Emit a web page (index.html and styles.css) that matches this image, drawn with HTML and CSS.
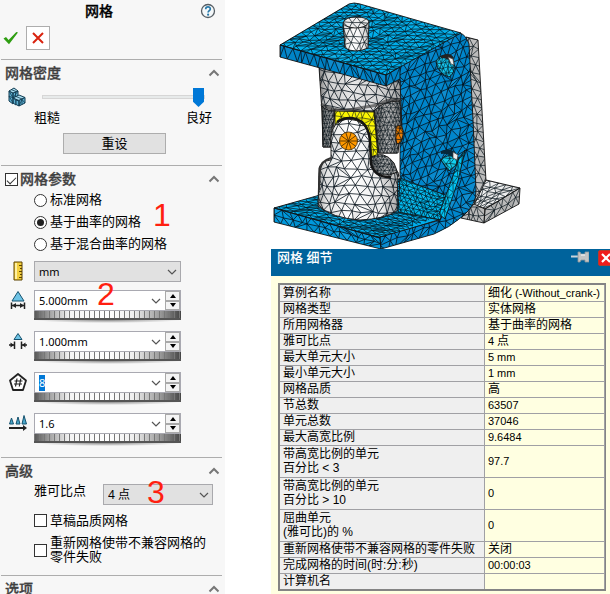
FILE: index.html
```
<!DOCTYPE html>
<html lang="zh-CN">
<head>
<meta charset="utf-8">
<title>网格</title>
<link rel="stylesheet" href="styles.css">
</head>
<body>
<svg class="defs" aria-hidden="true">
  <symbol id="chev-up" viewBox="0 0 12 8"><path d="M1.500 6.500L6 2l4.500 4.500" fill="none" stroke="#777" stroke-width="2"/></symbol>
  <symbol id="chev-down" viewBox="0 0 10 6"><path d="M1 1l4 4 4-4" fill="none" stroke="#555" stroke-width="1.200"/></symbol>
  <symbol id="tri-up" viewBox="0 0 6 4"><path d="M0 4l3-4 3 4z"/></symbol>
  <symbol id="tri-down" viewBox="0 0 6 4"><path d="M0 0h6L3 4z"/></symbol>
</svg>
<main class="app">
  <form class="panel">
    <header class="panel-title">
      <h1>网格</h1>
      <button type="button" class="bare help" aria-label="帮助">
        <svg width="16" height="16" viewBox="0 0 16 16"><circle cx="8" cy="8" r="6.500" fill="#f4f8fa" stroke="#555d63" stroke-width="1.300"/><path d="M5.700 6.200C5.700 3.100 10.400 3.200 10.300 6c0 1.600-2.200 1.700-2.200 3.500" fill="none" stroke="#2878a8" stroke-width="1.700"/><circle cx="8.100" cy="11.700" r="1.100" fill="#2878a8"/></svg>
      </button>
    </header>
    <div class="actions">
      <button type="button" class="bare" aria-label="确定"><svg width="16" height="14" viewBox="0 0 16 14"><path d="M.5 7.500l2.500-1.500 2.600 3L13.300 1l1.700.5L6 13.300z" fill="#2f9e12"/></svg></button>
      <button type="button" class="cancel" aria-label="取消"><svg width="12" height="12" viewBox="0 0 12 12"><path d="M1 1l10 10M11 1L1 11" stroke="#d9230f" stroke-width="2"/></svg></button>
    </div>

    <section class="section">
      <div class="head"><h2>网格密度</h2><button type="button" class="bare" aria-label="折叠网格密度"><svg width="12" height="8"><use href="#chev-up"/></svg></button></div>
      <div class="slider-row">
        <svg width="18" height="20" viewBox="0 0 18 20"><g fill="#5eb0d2" stroke="#123c52" stroke-width="1" stroke-linejoin="round"><path d="M1 4l4 2v11l-4-3zM5 6l5-2v5l-5 2zM5 11l3 2v5l-3-2z"/><path fill="#a8dcee" d="M1 4l5-3 4 3-5 2zM5 11l6-3 6 2.500-6 3z"/><path d="M8 13l3 1v5l-3-1.500zM11 13.500l6-3v5.500l-6 3z"/><path fill="none" stroke-width=".8" d="M1 9l4 2M1 4l4 7M5 11l5-7M7.500 5v5M3 2.500l5 2M1 9l4 7M11 19l3-6.500 3 3.500M14 12v5.500M8 9.500l6 2.500"/></g></svg>
        <input type="range" min="0" max="100" value="100" aria-label="网格密度">
      </div>
      <div class="scale"><span>粗糙</span><span>良好</span></div>
      <button type="button" class="reset">重设</button>
    </section>

    <section class="section">
      <div class="head"><label class="head-check"><input type="checkbox" checked><span>网格参数</span></label><button type="button" class="bare" aria-label="折叠网格参数"><svg width="12" height="8"><use href="#chev-up"/></svg></button></div>
      <div class="radios">
        <label><input type="radio" name="mesher">标准网格</label>
        <label><input type="radio" name="mesher" checked>基于曲率的网格</label>
        <label><input type="radio" name="mesher">基于混合曲率的网格</label>
        <span class="mark mark-1">1</span>
      </div>
      <div class="param unit">
        <svg width="20" height="20" viewBox="0 0 20 20"><path d="M6 1h8v18H6z" fill="#f3cf3c" stroke="#5c4300"/><path d="M7 2h2v16H7z" fill="#fff0a0"/><path d="M11 4.500h3M12 7.500h2M11 10.500h3M12 13.500h2M11 16.500h3" stroke="#5c4300"/></svg>
        <div class="select"><select aria-label="单位"><option>mm</option></select><svg width="10" height="6"><use href="#chev-down"/></svg></div>
      </div>
      <div class="params">
        <div class="param">
          <svg width="20" height="20" viewBox="0 0 20 20"><path d="M10 1.500L16 11H4z" fill="#6fc4e6" stroke="#16526e"/><path d="M3.500 12.500v6.500M16.500 12.500v6.500M4 15.500h12" stroke="#222" stroke-width="1.500"/><path d="M4 15.500l4-2.500v5zM16 15.500l-4-2.500v5z" fill="#222"/></svg>
          <div class="spin"><div class="field"><input type="text" value="5.000mm" aria-label="最大单元大小"><button type="button" class="bare drop" aria-label="列表"><svg width="10" height="6"><use href="#chev-down"/></svg></button><div class="steps"><button type="button" aria-label="增加"><svg width="6" height="4"><use href="#tri-up"/></svg></button><button type="button" aria-label="减少"><svg width="6" height="4"><use href="#tri-down"/></svg></button></div></div><div class="wheel"></div><div class="shade"></div></div>
          <span class="mark mark-2">2</span>
        </div>
        <div class="param">
          <svg width="20" height="20" viewBox="0 0 20 20"><path d="M10 2.500l4 6H6z" fill="#6fc4e6" stroke="#16526e"/><path d="M6.500 10.500v7.500M13.500 10.500v7.500M1 14h5M14 14h5" stroke="#222" stroke-width="1.500"/><path d="M6 14l-3.500-2.500v5zM14 14l3.500-2.500v5z" fill="#222"/></svg>
          <div class="spin"><div class="field"><input type="text" value="1.000mm" aria-label="最小单元大小"><button type="button" class="bare drop" aria-label="列表"><svg width="10" height="6"><use href="#chev-down"/></svg></button><div class="steps"><button type="button" aria-label="增加"><svg width="6" height="4"><use href="#tri-up"/></svg></button><button type="button" aria-label="减少"><svg width="6" height="4"><use href="#tri-down"/></svg></button></div></div><div class="wheel"></div><div class="shade"></div></div>
        </div>
        <div class="param">
          <svg width="20" height="20" viewBox="0 0 20 20"><path d="M10 2l8 6.500-3 9.500H5L2 8.500z" fill="#fff" stroke="#222" stroke-width="1.800" stroke-linejoin="round"/><path d="M9 6.500l-1.500 8M12.800 6.500l-1.500 8M6.500 9h8M6 12h8" stroke="#222" stroke-width="1.200"/></svg>
          <div class="spin"><div class="field"><input type="text" value="8" id="circle-count" aria-label="圆中最小单元数"><button type="button" class="bare drop" aria-label="列表"><svg width="10" height="6"><use href="#chev-down"/></svg></button><div class="steps"><button type="button" aria-label="增加"><svg width="6" height="4"><use href="#tri-up"/></svg></button><button type="button" aria-label="减少"><svg width="6" height="4"><use href="#tri-down"/></svg></button></div></div><div class="wheel"></div><div class="shade"></div></div>
        </div>
        <div class="param">
          <svg width="20" height="20" viewBox="0 0 20 20"><path d="M3.500 5l2 6h-4zM10 4l2 7H8zM16 2.500l2.500 8.500h-4.500z" fill="#4aa8cc" stroke="#16526e"/><path d="M1 15h15" stroke="#222" stroke-width="2"/><path d="M19 15l-4-3v6z" fill="#222"/></svg>
          <div class="spin"><div class="field"><input type="text" value="1.6" aria-label="单元大小增长比率"><button type="button" class="bare drop" aria-label="列表"><svg width="10" height="6"><use href="#chev-down"/></svg></button><div class="steps"><button type="button" aria-label="增加"><svg width="6" height="4"><use href="#tri-up"/></svg></button><button type="button" aria-label="减少"><svg width="6" height="4"><use href="#tri-down"/></svg></button></div></div><div class="wheel"></div><div class="shade"></div></div>
        </div>
      </div>
    </section>

    <section class="section">
      <div class="head"><h2>高级</h2><button type="button" class="bare" aria-label="折叠高级"><svg width="12" height="8"><use href="#chev-up"/></svg></button></div>
      <div class="jacobian">
        <label for="jacobian">雅可比点</label>
        <div class="select"><select id="jacobian"><option>4 点</option></select><svg width="10" height="6"><use href="#chev-down"/></svg></div>
        <span class="mark mark-3">3</span>
      </div>
      <div class="checks">
        <label><input type="checkbox"><span>草稿品质网格</span></label>
        <label><input type="checkbox"><span>重新网格使带不兼容网格的<br>零件失败</span></label>
      </div>
    </section>

    <section class="section">
      <div class="head"><h2>选项</h2><button type="button" class="bare" aria-label="展开选项"><svg width="12" height="8"><use href="#chev-up"/></svg></button></div>
    </section>
  </form>

  <div class="view">
    <svg id="model" class="model" viewBox="271 0 339 249" role="img" aria-label="网格模型"></svg>
    <section class="details">
      <header class="bar">
        <h2>网格 细节</h2>
        <button type="button" class="bare pin" aria-label="固定"><svg width="18" height="12" viewBox="0 0 18 12"><path d="M0 5.500h7" stroke="#c8d4dc" stroke-width="2"/><path d="M7 1h2l1 2h4V1h4v10h-4V9h-4l-1 2H7z" fill="#c5c5c5" stroke="#8e979c" stroke-width=".8"/><path d="M10 4h4" stroke="#fff"/></svg></button>
        <button type="button" class="bare close" aria-label="关闭"><svg width="10" height="10" viewBox="0 0 10 10"><path d="M1 1l8 8M9 1L1 9" stroke="#fff" stroke-width="2.200"/></svg></button>
      </header>
      <div class="table-wrap">
        <table>
          <tbody>
            <tr><th scope="row">算例名称</th><td><span>细化</span> (-Without_crank-)</td></tr>
            <tr><th scope="row">网格类型</th><td><span>实体网格</span></td></tr>
            <tr><th scope="row">所用网格器</th><td><span>基于曲率的网格</span></td></tr>
            <tr><th scope="row">雅可比点</th><td>4 <span>点</span></td></tr>
            <tr><th scope="row">最大单元大小</th><td>5 mm</td></tr>
            <tr><th scope="row">最小单元大小</th><td>1 mm</td></tr>
            <tr><th scope="row">网格品质</th><td><span>高</span></td></tr>
            <tr><th scope="row">节总数</th><td>63507</td></tr>
            <tr><th scope="row">单元总数</th><td>37046</td></tr>
            <tr><th scope="row">最大高宽比例</th><td>9.6484</td></tr>
            <tr class="tall"><th scope="row">带高宽比例的单元<br>百分比 &lt; 3</th><td>97.7</td></tr>
            <tr class="tall"><th scope="row">带高宽比例的单元<br>百分比 &gt; 10</th><td>0</td></tr>
            <tr class="tall"><th scope="row">屈曲单元<br>(雅可比)的 %</th><td>0</td></tr>
            <tr><th scope="row">重新网格使带不兼容网格的零件失败</th><td><span>关闭</span></td></tr>
            <tr><th scope="row">完成网格的时间(时:分:秒)</th><td>00:00:03</td></tr>
            <tr><th scope="row">计算机名</th><td></td></tr>
          </tbody>
        </table>
      </div>
    </section>
  </div>
</main>
<script src="model.js"></script>
</body>
</html>
```
FILE: styles.css
```
* { box-sizing: border-box; }

body {
  margin: 0;
  background: #fff;
  color: #000;
  font: 13px/16px "Liberation Sans", "Noto Sans CJK SC", sans-serif;
  overflow: hidden;
}

h1, h2 { margin: 0; font-size: 14px; line-height: 20px; font-weight: 500; }
svg { display: block; }
button, input, select { font: inherit; color: inherit; margin: 0; }
.defs { position: absolute; width: 0; height: 0; }
.bare { border: 0; padding: 0; background: none; }

.app {
  display: grid;
  grid-template-columns: 225px minmax(0, 1fr);
  column-gap: 46px;
  height: 100vh;
}

/* Property panel */
.panel {
  background: #f7f7f7;
  padding: 0 3px 0 1px;
  overflow: hidden;
}

.panel-title {
  display: grid;
  grid-template-columns: 1fr auto 1fr;
  align-items: center;
  height: 22px;
  padding-right: 6px;
}

.panel-title h1 { grid-column: 2; }
.help { justify-self: end; }

.panel-title h1 { margin-right: 18px; }
.panel-title { grid-template-columns: 84px auto 1fr; }

.actions {
  display: flex;
  align-items: center;
  gap: 7px;
  height: 37px;
  padding: 0 2px 5px;
}

.cancel {
  display: grid;
  place-items: center;
  width: 24px;
  height: 24px;
  padding: 0;
  border: 1px solid #adadad;
  background: #fff;
}

.section { border-top: 1px solid #adadad; padding-bottom: 11px; }

.head {
  display: flex;
  align-items: center;
  justify-content: space-between;
  height: 26px;
  padding: 0 2px 0 4px;
  color: #404040;
}

.head-check { display: flex; align-items: center; gap: 2px; font-size: 14px; font-weight: 500; }
.head h2, .head-check span, .panel-title h1 { -webkit-text-stroke: 0.3px; }

input[type="checkbox"], input[type="radio"] {
  appearance: none;
  flex: none;
  display: grid;
  place-items: center;
  width: 13px;
  height: 13px;
  border: 1px solid #333;
  background: #fff;
}

input[type="radio"] { border-radius: 50%; }
input[type="radio"]:checked::before { content: ""; width: 7px; height: 7px; border-radius: 50%; background: #222; }
input[type="checkbox"]:checked::before {
  content: "";
  width: 8px;
  height: 4px;
  border: solid #333;
  border-width: 0 0 1px 1px;
  transform: rotate(-45deg);
}

.slider-row { display: flex; align-items: center; height: 22px; padding-left: 7px; gap: 16px; }

input[type="range"] { appearance: none; width: 163px; height: 20px; background: none; }
input[type="range"]::-webkit-slider-runnable-track { height: 4px; border: 1px solid #d6d6d6; background: #e7eaea; }
input[type="range"]::-webkit-slider-thumb {
  appearance: none;
  width: 11px;
  height: 19px;
  margin-top: -8px;
  background: #0078d7;
  clip-path: polygon(0 0, 100% 0, 100% 72%, 50% 100%, 0 72%);
}

.scale { display: flex; justify-content: space-between; height: 20px; padding: 2px 10px 2px 33px; }

.reset {
  display: block;
  width: 103px;
  height: 21px;
  margin: 5px 0 0 62px;
  padding: 0;
  border: 1px solid #adadad;
  background: #e1e1e1;
  line-height: 19px;
}

.radios { position: relative; display: flex; flex-direction: column; align-items: flex-start; gap: 6px; padding-left: 33px; }
.radios label, .checks label { display: flex; align-items: center; gap: 3px; }

.mark {
  position: absolute;
  color: #ff1f10;
  font: 32px/32px "Liberation Sans", sans-serif;
  pointer-events: none;
}

.mark-1 { left: 152px; top: 7px; }
.mark-2 { left: 96px; top: -12px; }
.mark-3 { left: 146px; top: -8px; }

.param { position: relative; display: grid; grid-template-columns: 26px 147px; align-items: start; padding-left: 7px; }
.unit { margin: 9px 0 8px; }
.params { display: flex; flex-direction: column; gap: 8px; }

.select { position: relative; }
.select svg { position: absolute; right: 4px; top: 8px; pointer-events: none; }

select {
  appearance: none;
  display: block;
  width: 100%;
  height: 21px;
  padding: 0 4px;
  border: 1px solid #a9a9ad;
  border-radius: 0;
  background: #e1e1e1;
  font: 11px/16px "Noto Sans", "Noto Sans CJK SC", sans-serif;
}

#jacobian { font-size: 12px; }

.field { display: flex; height: 21px; border: 1px solid #a9a9b1; background: #fff; }

.field input {
  flex: 1;
  min-width: 0;
  border: 0;
  padding: 0 4px;
  background: none;
  font: 11px/16px "Noto Sans", "Noto Sans CJK SC", sans-serif;
  outline: 0;
}

.field input::selection { background: #0078d7; color: #fff; }
.drop { display: grid; place-items: center; width: 18px; }
.steps { display: grid; grid-template-rows: 1fr 1fr; width: 15px; }
.steps button { display: grid; place-items: center; padding: 0; border: 1px solid #a9a9a9; background: #f4f4f4; }

.wheel {
  height: 9px;
  border-bottom: 2px solid #555;
  background:
    repeating-linear-gradient(90deg, #777 0 1px, transparent 1px 5px),
    linear-gradient(90deg, #555, #aaa 12%, #f4f4f4 24%, #fff 50%, #eee 68%, #999 86%, #444);
}

.shade { height: 3px; background: radial-gradient(ellipse 50% 100% at 50% 0, #8c8c8c, #f7f7f7); }

.jacobian {
  position: relative;
  display: grid;
  grid-template-columns: 69px 110px;
  align-items: start;
  padding-left: 33px;
  line-height: 14px;
}

.checks { display: flex; flex-direction: column; gap: 8px; padding: 8px 0 0 33px; line-height: 14px; }
.checks label { min-height: 15px; }

/* Model view and details window */
.view { display: flex; flex-direction: column; min-width: 0; }
.model { width: 100%; height: auto; flex: none; }
.details { flex: 1; background: #ffffe1; }

.bar {
  display: flex;
  align-items: flex-start;
  height: 27px;
  background: #00639c;
  color: #fff;
}

.bar h2 { flex: 1; padding-left: 6px; font-size: 13px; line-height: 18px; }
.pin { margin: 2px 9px 0 0; }

.close {
  display: grid;
  place-items: center;
  width: 16px;
  height: 16px;
  margin: 1px -4px 0 0;
  border: 1px solid #b53a2c;
  border-radius: 2px;
  background: #f01c1c;
}

.table-wrap { margin: 7px 4px 0 7px; border: solid #848484; border-width: 2px 1px 2px 2px; }

table {
  width: 100%;
  border-collapse: collapse;
  table-layout: fixed;
  font: 12px/14px "Liberation Sans", "Noto Sans CJK SC", sans-serif;
}

tr { height: 16px; }
th, td { padding: 0 3px; border-bottom: 1px solid #a0a0a4; border-right: 1px solid #a0a0a4; text-align: left; font-weight: 400; white-space: nowrap; }
th { width: 63%; background: #efefef; }
td { font-size: 11px; }
td span { font-size: 12px; }
.tall { height: 32px; }
tr:last-child th, tr:last-child td { border-bottom: 0; }
```
FILE: model.js
```
// Draws the meshed assembly: each face is an outline filled with a
// jittered triangular grid spanned between four corner points.
const NS = "http://www.w3.org/2000/svg";
const model = document.getElementById("model");
let seed = 7;
const rnd = () => (seed = (seed * 16807) % 2147483647) / 2147483647;
const add = (name, attrs, parent = model) => {
  const el = document.createElementNS(NS, name);
  for (const key in attrs) el.setAttribute(key, attrs[key]);
  parent.appendChild(el);
  return el;
};
let count = 0;

function face(outline, fill, quad, nu, nv, round = false, line = 0.7) {
  const id = "face" + count++;
  add("path", { d: outline }, add("clipPath", { id }));
  add("path", { d: outline, fill });
  const g = add("g", { "clip-path": `url(#${id})` });
  const pts = [];
  for (let j = 0; j <= nv; j++) {
    pts.push([]);
    for (let i = 0; i <= nu; i++) {
      let u = i / nu, v = j / nv;
      if (i && i < nu) u += (rnd() - 0.5) * 0.5 / nu + (j % 2 ? 0.25 : -0.25) / nu;
      if (j && j < nv) v += (rnd() - 0.5) * 0.4 / nv;
      if (round) u = u * 0.5 + (1 - Math.cos(Math.PI * u)) / 4;
      const at = k => (quad[0][k] * (1 - u) + quad[1][k] * u) * (1 - v) + (quad[3][k] * (1 - u) + quad[2][k] * u) * v;
      pts[j].push([at(0).toFixed(1), at(1).toFixed(1)]);
    }
  }
  let d = "";
  for (let j = 0; j < nv; j++) {
    for (let i = 0; i < nu; i++) {
      const a = pts[j][i], b = pts[j][i + 1], c = pts[j + 1][i + 1], e = pts[j + 1][i];
      const flip = rnd() < 0.15 ? j % 2 : !(j % 2);
      const tri = flip ? [a, b, e] : [a, b, c];
      add("path", { d: `M${tri.join("L")}Z`, fill: rnd() < 0.5 ? "#fff" : "#000", opacity: (rnd() * 0.08).toFixed(2) }, g);
      d += `M${a}L${b}M${a}L${e}` + (flip ? `M${b}L${e}` : `M${a}L${c}`);
    }
  }
  add("path", { d, fill: "none", stroke: "#06121a", "stroke-width": line }, g);
  add("path", { d: outline, fill: "none", stroke: "#111", "stroke-width": 0.9 });
}

function gradient(id, stops) {
  const g = add("linearGradient", { id });
  stops.forEach(([offset, color]) => add("stop", { offset, "stop-color": color }, g));
  return `url(#${id})`;
}
const steel = gradient("steel", [[0, "#888"], [0.1, "#ccc"], [0.4, "#e8e8e8"], [0.8, "#d0d0d0"], [1, "#999"]]);
const bright = gradient("bright", [[0, "#aaa"], [0.1, "#e4e4e4"], [0.4, "#fff"], [0.8, "#eee"], [1, "#a8a8a8"]]);
const dark = gradient("dark", [[0, "#666"], [0.5, "#b4b4b4"], [1, "#909090"]]);

// Rear bracket
face("M466 37L478 40L486 181L487 208L475 208Z", "#bbb", [[466, 37], [478, 40], [489, 208], [475, 208]], 2, 20);
face("M486 180L520 188L485 209L474 205Z", "#efefef", [[486, 180], [520, 188], [485, 209], [470, 203]], 5, 5);
face("M461 218L474 204L485 209L484 223Z", "#bbb", [[461, 207], [485, 207], [484, 223], [461, 223]], 4, 2);
face("M485 209L520 188L519 204L484 223Z", "#bbb", [[485, 209], [520, 188], [519, 204], [484, 223]], 5, 2);

// Front base
face("M274 208L320 195L404 178L450 197L438 220L380 238Z", "#00aeec", [[274, 208], [390, 172], [456, 210], [380, 238]], 18, 14);
face("M274 208L380 238L381 249L274 222Z", "#0098dc", [[274, 208], [380, 238], [381, 249], [274, 222]], 13, 2, false, 0.8);

// Upright plate
face("M386 74L460 33Q466 35 469 44L473 120L476 190Q477 204 463 216Q449 228 434 234L381 249L380 237L440 220L447 197L400 181L400 79L386 87Z", "#0086cc", [[378, 65], [472, 28], [478, 216], [380, 254]], 12, 22, false, 0.8);
face("M400 178L448 196L440 220L398 212Z", "#00baf0", [[396, 178], [450, 196], [442, 225], [396, 212]], 10, 8);
face("M465 150L458 181L445 219L439 214L449 187L459 158Z", "#00c4f4", [[459, 148], [466, 150], [445, 219], [438, 215]], 2, 10, false, 0.6);

// Mounting holes
face("M436 62Q438 56 445 55Q454 55 454 64Q455 74 449 77Q438 74 436 62Z", "#12c5ef", [[434, 54], [455, 52], [454, 77], [435, 77]], 5, 5, false, 0.6);
add("path", { d: "M441 56Q450 51 454 58L450 62Q449 58 441 58Z", fill: "#222" });
add("path", { d: "M448 57l5 2 1 6-3-1z", fill: "#eee", stroke: "#444", "stroke-width": 0.7 });
face("M441 160Q447 153 458 157L456 165L449 171Z", "#12d0ef", [[440, 152], [460, 152], [458, 171], [442, 170]], 3, 3, false, 0.6);
add("path", { d: "M441 151Q450 147 456 153L453 158Q448 153 441 154Z", fill: "#07283a" });
add("path", { d: "M453 152l5 3-1 5-4-2z", fill: "#eee", stroke: "#444", "stroke-width": 0.7 });

// Upper yoke
face("M319 67L400 80L402 128L397 153L378 153L374 112L335 109L332 147L323 147L322 112Z", steel, [[319, 62], [402, 74], [402, 154], [321, 150]], 10, 10, true, 0.8);
add("path", { d: "M321 104Q336 113 350 110T378 105Q388 98 400 100", fill: "none", stroke: "#333", "stroke-width": 3, opacity: 0.6 });
face("M322 106Q327 112 334 110L334 120Q331 128 331 147L323 147Z", dark, [[320, 104], [335, 104], [334, 147], [322, 147]], 5, 11, false, 0.6);
face("M374 111Q382 101 400 101L401 125L398 153L379 153Z", dark, [[374, 99], [402, 99], [399, 153], [376, 153]], 8, 12, true, 0.6);
face("M396 127Q401 123 403 130Q404 142 398 144Q395 144 396 127Z", "#e87a00", [[394, 123], [404, 123], [404, 145], [394, 145]], 2, 4);

// Spider block
face("M335 111L374 112L378 157L365 158L335 130Z", "#fbf500", [[334, 109], [375, 111], [380, 158], [336, 158]], 6, 6, false, 0.6);

// Lower yoke
face("M369 158Q384 149 394 163L399 176L386 181L373 173Z", dark, [[366, 153], [399, 153], [399, 181], [366, 181]], 9, 8, false, 0.6);
face("M319 168Q321 161 331 160L331 138Q332 120 348 119Q367 120 370 138L372 168Q380 180 398 172L397 211Q384 219 360 220Q332 218 318 206Z", bright, [[317, 116], [400, 116], [398, 222], [318, 220]], 10, 12, true, 0.8);
add("path", { d: "M337 122Q350 114 362 122Q369 128 370 141L371 164Q375 178 391 177", fill: "none", stroke: "#151515", "stroke-width": 2.5 });
add("path", { d: "M331 158Q321 161 320 169L319 190", fill: "none", stroke: "#333", "stroke-width": 2 });
add("circle", { cx: 348.5, cy: 141, r: 9, fill: "#ff9900", stroke: "#3b2500", "stroke-width": 0.8 });
let spokes = "";
for (let k = 0; k < 10; k++) spokes += `M348.5 141l${(9 * Math.cos(k * 0.6283)).toFixed(1)} ${(9 * Math.sin(k * 0.6283)).toFixed(1)}`;
add("path", { d: spokes, stroke: "#3b2500", "stroke-width": 0.8 });

// Top plate and shaft
face("M280 45L349 4Q354 2 360 4L461 33L386 75Z", "#00aeea", [[280, 45], [354, 1], [465, 34], [386, 75]], 13, 16);
face("M280 45L386 75L386 86L280 57Z", "#0084c8", [[280, 45], [386, 75], [386, 86], [280, 57]], 15, 1, false, 0.8);
face("M386 75L400 67L400 79L386 86Z", "#0084c8", [[386, 75], [400, 67], [400, 79], [386, 86]], 2, 1);
face("M343 24L345 48Q355 54 368 48L369 22Z", bright, [[343, 20], [369, 20], [368, 51], [345, 51]], 4, 4, true);
face("M343 23Q345 17 356 17Q368 17 369 22Q366 28 355 28Q344 27 343 23Z", "#eee", [[343, 17], [369, 17], [369, 28], [343, 28]], 3, 2);

document.getElementById("circle-count").select();
```
